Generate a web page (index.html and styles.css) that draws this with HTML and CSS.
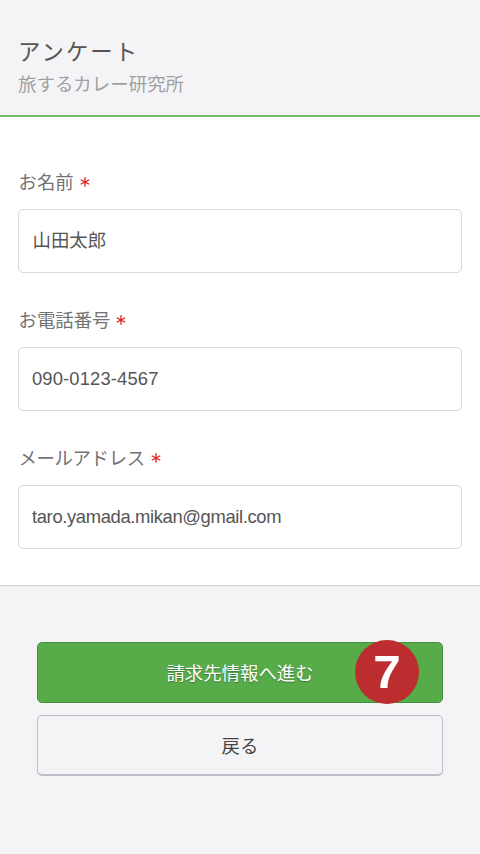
FILE: index.html
```html
<!DOCTYPE html>
<html lang="ja">
<head>
<meta charset="utf-8">
<title>アンケート</title>
<link rel="stylesheet" href="styles.css">
</head>
<body>
<header class="header">
  <h1 class="title">アンケート</h1>
  <p class="subtitle">旅するカレー研究所</p>
</header>
<form class="form">
  <main class="fields">
    <label class="field"><span class="label">お名前<svg class="required" viewBox="0 0 10 10"><path d="M5 .3v9.4M.7 2.7l8.6 4.6M9.3 2.7L.7 7.3"/></svg></span>
      <span class="input input-ja">山田太郎</span></label>
    <label class="field"><span class="label">お電話番号<svg class="required" viewBox="0 0 10 10"><path d="M5 .3v9.4M.7 2.7l8.6 4.6M9.3 2.7L.7 7.3"/></svg></span>
      <span class="input input-tel">090-0123-4567</span></label>
    <label class="field"><span class="label"><span class="kana">メールアドレス</span><svg class="required" viewBox="0 0 10 10"><path d="M5 .3v9.4M.7 2.7l8.6 4.6M9.3 2.7L.7 7.3"/></svg></span>
      <span class="input">taro.yamada.mikan@gmail.com</span></label>
  </main>
  <footer class="actions">
    <button class="button primary" type="button">請求先情報へ進む<span class="step"><span class="digit">7</span></span></button>
    <button class="button secondary" type="button">戻る</button>
  </footer>
</form>
</body>
</html>
```
FILE: styles.css
```css
* { box-sizing: border-box; }
body {
  margin: 0;
  height: 854px;
  overflow: hidden;
  background: #f4f4f7;
  color: #555;
  font-family: "Liberation Sans", "Noto Sans CJK JP", sans-serif;
}
.header {
  height: 117px;
  padding: 37px 18px 0;
  border-bottom: 2px solid #6fbb67;
}
.title { margin: 0; font-size: 22.4px; line-height: 32px; font-weight: 400; letter-spacing: 2px; color: #555; }
.subtitle { margin: 0; font-size: 18.4px; line-height: 31px; letter-spacing: .06px; color: #a0a0a0; }
.fields {
  display: flex;
  flex-direction: column;
  gap: 36px;
  height: 469px;
  padding: 50px 18px 0;
  background: #fff;
  border-bottom: 1px solid #ccc;
}
.field { display: block; height: 102.2px; }
.label { display: flex; align-items: center; gap: 6px; height: 32px; margin-bottom: 10px; padding-left: .5px; font-size: 18.4px; line-height: 32px; color: #737373; }
.kana { letter-spacing: -.36px; }
.required { width: 10px; height: 10px; margin-bottom: 2px; fill: none; stroke: #e02020; stroke-width: 1.3; }
.input {
  display: flex;
  align-items: center;
  height: 63.5px;
  padding: 0 13px;
  border: 1px solid #d9d9d9;
  border-radius: 5px;
  background: #fff;
  font-size: 18.4px;
  letter-spacing: -.36px;
}
.input-ja { letter-spacing: 0; padding: 0 13.5px 4px; }
.input-tel { letter-spacing: .14px; }
.actions { display: flex; flex-direction: column; gap: 12px; padding: 56px 37px 0; }
.button {
  position: relative;
  width: 100%;
  height: 61px;
  padding: 0 0 2px;
  border-radius: 5px;
  font: inherit;
  font-size: 18.4px;
}
.primary { border: 1px solid #43913a; background: #57ab48; color: #fff; text-shadow: 0 1px 1px rgba(0, 0, 0, .3); }
.secondary { padding-bottom: 0; border: 1px solid #bfbdcb; border-bottom-width: 2px; background: #f4f4f7; color: #444; }
.step {
  position: absolute;
  right: 23px;
  top: -3px;
  width: 64px;
  height: 64px;
  border-radius: 50%;
  background: #bb2d2e;
  font-size: 47px;
  font-weight: 700;
  line-height: 64px;
  text-shadow: none;
}
.digit { display: block; transform: scaleX(1.05); }
```
